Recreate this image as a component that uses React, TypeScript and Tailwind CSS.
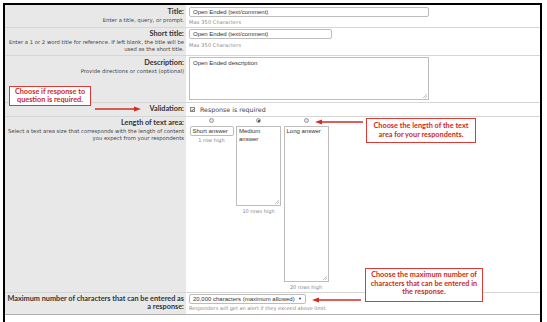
import React from "react";

const labelCls = "font-['Lato',sans-serif] font-bold text-[7.3px] leading-[8px] text-[#333]";
const helpCls = "font-['DejaVu_Sans',sans-serif] text-[5.3px] leading-[6.5px] text-[#444]";
const noteCls = "font-['DejaVu_Sans',sans-serif] text-[5px] leading-[6px] text-[#888]";
const fieldCls =
    "whitespace-nowrap overflow-hidden border border-[#bdbdbd] bg-white font-['Liberation_Sans',sans-serif] text-[6px] leading-[8px] text-[#333]";
const calloutCls =
    "absolute border-[1.5px] border-[#dc3b35] bg-white text-center font-['Lato',sans-serif] font-bold text-[#cc2a22]";

function Grip() {
    return (
        <svg className="absolute right-[1px] bottom-[1px]" width="4" height="4" viewBox="0 0 4 4">
            <path d="M0 4 L4 0 M2 4 L4 2" stroke="#999" strokeWidth="0.6" />
        </svg>
    );
}

function Radio({checked}: {checked?: boolean}) {
    return (
        <div className="flex h-[5px] w-[5px] items-center justify-center rounded-full border-[0.5px] border-[#9a9a9a] bg-[#e4e4e4]">
            {checked && <div className="h-[2px] w-[2px] rounded-full bg-[#333]" />}
        </div>
    );
}

function Row({left, children, className}: {left: React.ReactNode; children: React.ReactNode; className: string}) {
    return (
        <div className={`flex border-b border-[#d6d6d6] ${className}`}>
            <div className="w-[181px] shrink-0 bg-[#e8e8e8] pr-[2px] text-right">{left}</div>
            <div className="flex-1 pl-[3px]">{children}</div>
        </div>
    );
}

export default function App() {
    return (
        <div className="relative h-[322px] w-[547px] overflow-hidden bg-white">
            <div className="ml-[3px] mt-[3px] h-[319px] w-[539px] border-x-2 border-t-2 border-black">
                <Row className="h-[23px]" left={
                    <div className="pt-[3px]">
                        <div className={labelCls}>Title:</div>
                        <div className={`${helpCls} mt-[1px]`}>Enter a title, query, or prompt.</div>
                    </div>
                }>
                    <div className={`${fieldCls} mt-[2px] h-[10px] w-[240px] rounded-[2px] pl-[3px]`}>Open Ended (text/comment)</div>
                    <div className={`${noteCls} mt-[2px] tracking-[0.1px]`}>Max 350 Characters</div>
                </Row>
                <Row className="h-[28px]" left={
                    <div className="pt-[2px]">
                        <div className={labelCls}>Short title:</div>
                        <div className={`${helpCls} mt-[1px]`}>
                            Enter a 1 or 2 word title for reference. If left blank, the title will be
                            <br />
                            used as the short title.
                        </div>
                    </div>
                }>
                    <div className={`${fieldCls} mt-[1px] h-[10px] w-[143px] rounded-[2px] pl-[3px]`}>Open Ended (text/comment)</div>
                    <div className={`${noteCls} mt-[3px] tracking-[0.1px]`}>Max 350 Characters</div>
                </Row>
                <Row className="h-[47px]" left={
                    <div className="pt-[3px]">
                        <div className={labelCls}>Description:</div>
                        <div className={`${helpCls} mt-[1px]`}>Provide directions or context (optional)</div>
                    </div>
                }>
                    <div className={`${fieldCls} relative mt-[1px] h-[43px] w-[240px] pl-[3px] pt-[1px] text-[6.5px] leading-[9px]`}>
                        Open Ended description
                        <Grip />
                    </div>
                </Row>
                <Row className="h-[14px]" left={<div className={`${labelCls} pt-[2px]`}>Validation:</div>}>
                    <div className="ml-[1px] flex items-center gap-[5px] pt-[3px]">
                        <div className="flex h-[5px] w-[5px] items-center justify-center border-[0.5px] border-[#888] bg-[#f4f4f4]">
                            <svg width="4" height="4" viewBox="0 0 4 4">
                                <path d="M0.5 2 L1.6 3.2 L3.6 0.6" stroke="#222" strokeWidth="0.8" fill="none" />
                            </svg>
                        </div>
                        <span className="font-['DejaVu_Sans',sans-serif] text-[6.3px] leading-[7px] text-[#444]">Response is required</span>
                    </div>
                </Row>
                <Row className="h-[176px]" left={
                    <div className="pt-[2px]">
                        <div className={labelCls}>Length of text area:</div>
                        <div className={`${helpCls} mt-[1px]`}>
                            Select a text area size that corresponds with the length of content
                            <br />
                            you expect from your respondents
                        </div>
                    </div>
                }>
                    <div className="flex gap-[2px] pt-[1px]">
                        <div className="flex w-[45px] flex-col items-center">
                            <Radio />
                            <div className={`${fieldCls} mt-[3px] h-[10px] w-[44px] rounded-[2px] pl-[2px]`}>Short answer</div>
                            <div className={`${noteCls} mt-[1px] text-[5.4px] text-[#555]`}>1 row high</div>
                        </div>
                        <div className="flex w-[45px] flex-col items-center">
                            <Radio checked />
                            <div className={`${fieldCls} relative mt-[3px] h-[80px] w-[45px] pl-[2px] text-[6.5px]`}>
                                Medium
                                <br />
                                answer
                                <Grip />
                            </div>
                            <div className={`${noteCls} mt-[2px] text-[5.4px] text-[#555]`}>10 rows high</div>
                        </div>
                        <div className="flex w-[46px] flex-col items-center">
                            <Radio />
                            <div className={`${fieldCls} relative mt-[3px] h-[156px] w-[45px] pl-[2px] text-[6.5px]`}>
                                Long answer
                                <Grip />
                            </div>
                            <div className={`${noteCls} mt-[2px] text-[5.4px] text-[#555]`}>20 rows high</div>
                        </div>
                    </div>
                </Row>
                <div className="flex h-[22px] border-b border-[#b0b0b0]">
                    <div className="w-[181px] shrink-0 bg-[#e8e8e8] pr-[2px] pt-[2px] text-right">
                        <div className={labelCls}>
                            Maximum number of characters that can be entered as
                            <br />
                            a response:
                        </div>
                    </div>
                    <div className="flex-1 pl-[3px] pt-[1px]">
                        <div className={`${fieldCls} flex h-[10px] w-[117px] items-center justify-between rounded-[2px] px-[3px] text-[5.9px]`}>
                            <span>20,000 characters (maximum allowed)</span>
                            <span className="text-[4px]">▼</span>
                        </div>
                        <div className={`${noteCls} mt-[1px]`}>Responders will get an alert if they exceed above limit.</div>
                    </div>
                </div>
            </div>

            <div className={`${calloutCls} left-[9px] top-[86px] h-[20px] w-[82px] pt-[1px] text-[7.3px] leading-[8px]`}>
                Choose if response to
                <br />
                question is required.
            </div>
            <div className={`${calloutCls} left-[366px] top-[118px] h-[25px] w-[110px] pt-[2px] text-[7.3px] leading-[9px]`}>
                Choose the length of the text
                <br />
                area for your respondents.
            </div>
            <div className={`${calloutCls} left-[365px] top-[268px] h-[34px] w-[118px] pt-[2px] text-[7.3px] leading-[8.5px]`}>
                Choose the maximum number of
                <br />
                characters that can be entered in
                <br />
                the response.
            </div>

            <svg className="pointer-events-none absolute left-0 top-0" width="547" height="322" viewBox="0 0 547 322">
                <g stroke="#d42a22" strokeWidth="1.4" fill="#d42a22">
                    <line x1="95" y1="109" x2="136" y2="109" />
                    <polygon points="141,109 134,106.5 134,111.5" stroke="none" />
                    <line x1="363" y1="122" x2="321" y2="122" />
                    <polygon points="315,122 322,119.5 322,124.5" stroke="none" />
                    <line x1="361" y1="300" x2="318" y2="300" />
                    <polygon points="312,300 319,297.5 319,302.5" stroke="none" />
                </g>
            </svg>
        </div>
    );
}
